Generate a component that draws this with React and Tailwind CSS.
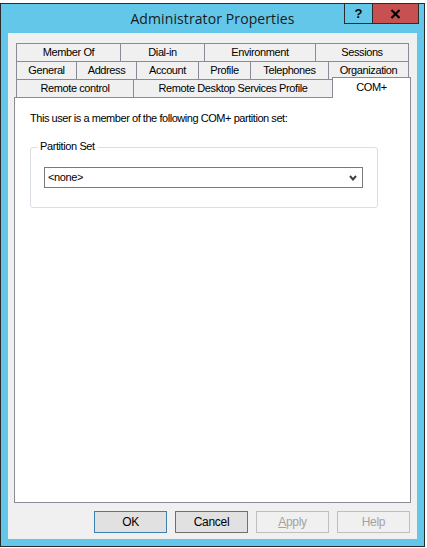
import React from "react";

const tabBase =
  "h-[18px] flex items-center justify-center border-t border-l border-[#898c95] bg-[#f0f0f0] text-[11px] text-black leading-none tracking-[-0.4px]";

function Tab({ w, label, last }) {
  return (
    <div className={tabBase + (last ? " border-r" : "")} style={{ width: w }}>
      {label}
    </div>
  );
}

function Btn({ children, kind }) {
  const cls =
    kind === "default"
      ? "border-[#3c7fb1] bg-[#e1e1e1] text-black"
      : kind === "normal"
      ? "border-[#707070] bg-[#e1e1e1] text-black"
      : "border-[#bfbfbf] bg-[#f0f0f0] text-[#a3a3a3]";
  return (
    <div
      className={
        "w-[73px] h-[22px] flex items-center justify-center border text-[12px] leading-none tracking-[-0.3px] " +
        cls
      }
    >
      {children}
    </div>
  );
}

export default function App() {
  return (
    <div
      className="w-[427px] h-[548px] bg-white pt-[3px] overflow-hidden"
      style={{ fontFamily: '"Liberation Sans", Arial, sans-serif' }}
    >
      <div className="w-[425px] h-[544px] border border-[#2b2b2b] bg-[#62c7e9] flex flex-col">
        {/* title bar */}
        <div className="relative h-[29px] flex items-center justify-center shrink-0">
          <span
            className="text-[14px] text-[#1a1a1a] leading-none tracking-[0.1px]"
            style={{ fontFamily: '"Open Sans", "Noto Sans", sans-serif' }}
          >
            Administrator Properties
          </span>
          <div className="absolute right-[5px] top-[-1px] flex h-[21px] border border-[#2b2b2b]">
            <div className="w-[28px] h-full flex items-center justify-center bg-[#62c7e9] border-r border-[#2b2b2b] text-[13px] font-bold text-black leading-none">
              ?
            </div>
            <div className="w-[45px] h-full flex items-center justify-center bg-[#c75050]">
              <svg width="11" height="10" viewBox="0 0 11 10">
                <path d="M1.5 1 L9.5 9 M9.5 1 L1.5 9" stroke="#000" strokeWidth="2.2" />
              </svg>
            </div>
          </div>
        </div>

        {/* client area */}
        <div className="mx-[7px] w-[409px] h-[506px] bg-[#f0f0f0] flex flex-col pt-[10px]">
          <div className="ml-[6px] w-[397px] flex flex-col">
            <div className="flex pl-[2px]">
              <Tab w={104} label="Member Of" />
              <Tab w={84} label="Dial-in" />
              <Tab w={111} label="Environment" />
              <Tab w={94} label="Sessions" last />
            </div>
            <div className="flex pl-[2px]">
              <Tab w={60} label="General" />
              <Tab w={60} label="Address" />
              <Tab w={62} label="Account" />
              <Tab w={52} label="Profile" />
              <Tab w={78} label="Telephones" />
              <Tab w={81} label="Organization" last />
            </div>
            <div className="flex pl-[2px] h-[18px] items-end">
              <Tab w={117} label="Remote control" />
              <Tab w={199} label="Remote Desktop Services Profile" />
              <div className="relative z-10 w-[79px] h-[21px] -mb-px border-t border-l border-r border-[#898c95] bg-white flex justify-center pt-[4px] text-[11px] text-black leading-none tracking-[-0.4px]">
                COM+
              </div>
            </div>

            {/* panel */}
            <div className="h-[406px] border border-[#898c95] bg-white flex flex-col px-[15px] pt-[14px]">
              <div className="text-[11px] text-black leading-[13px] tracking-[-0.45px]">
                This user is a member of the following COM+ partition set:
              </div>
              <div className="relative mt-[22px] w-[348px] h-[61px] border border-[#d9dee4] rounded-[3px] pt-[19px] pl-[13px]">
                <div className="absolute left-[6px] top-[-8px] bg-white px-[3px] text-[11px] text-black leading-[13px] tracking-[-0.4px]">
                  Partition Set
                </div>
                <div className="w-[319px] h-[21px] border border-[#7a7a7a] bg-white flex items-center justify-between pl-[3px] pr-[5px]">
                  <span className="text-[11px] text-black leading-none tracking-[-0.4px]">&lt;none&gt;</span>
                  <svg width="8" height="6" viewBox="0 0 8 6">
                    <path d="M1 1 L4 4.5 L7 1" fill="none" stroke="#404040" strokeWidth="2" />
                  </svg>
                </div>
              </div>
            </div>
          </div>

          {/* buttons */}
          <div className="mt-[8px] mr-[7px] flex justify-end gap-[8px]">
            <Btn kind="default">OK</Btn>
            <Btn kind="normal">Cancel</Btn>
            <Btn kind="disabled">
              <span>
                <span className="underline">A</span>pply
              </span>
            </Btn>
            <Btn kind="disabled">Help</Btn>
          </div>
        </div>
      </div>
    </div>
  );
}
